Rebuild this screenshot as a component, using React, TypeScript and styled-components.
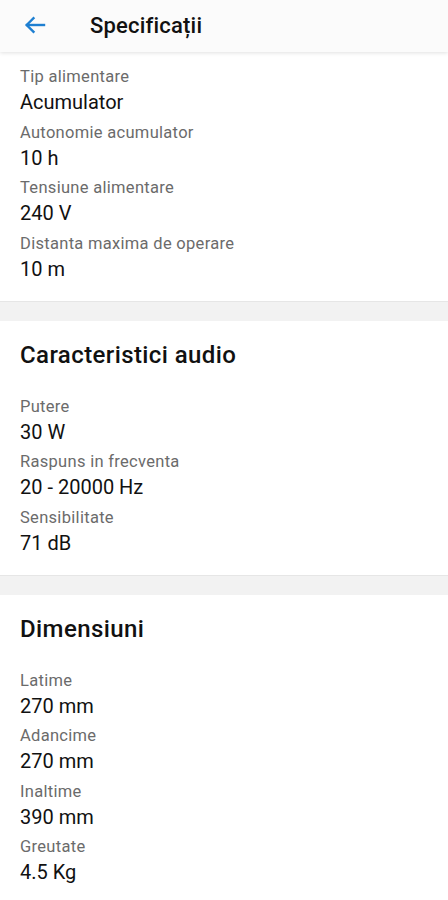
import React from 'react';
import styled, { createGlobalStyle } from 'styled-components';

type Spec = { label: string; value: string };
type Section = { title?: string; specs: Spec[] };

const sections: Section[] = [
  {
    specs: [
      { label: 'Tip alimentare', value: 'Acumulator' },
      { label: 'Autonomie acumulator', value: '10 h' },
      { label: 'Tensiune alimentare', value: '240 V' },
      { label: 'Distanta maxima de operare', value: '10 m' },
    ],
  },
  {
    title: 'Caracteristici audio',
    specs: [
      { label: 'Putere', value: '30 W' },
      { label: 'Raspuns in frecventa', value: '20 - 20000 Hz' },
      { label: 'Sensibilitate', value: '71 dB' },
    ],
  },
  {
    title: 'Dimensiuni',
    specs: [
      { label: 'Latime', value: '270 mm' },
      { label: 'Adancime', value: '270 mm' },
      { label: 'Inaltime', value: '390 mm' },
      { label: 'Greutate', value: '4.5 Kg' },
    ],
  },
];

const GlobalStyle = createGlobalStyle`
  body {
    margin: 0;
    background: #ffffff;
    font-family: Roboto, "Noto Sans", sans-serif;
    color: #111;
  }
`;

const Page = styled.div`
  width: 448px;
  min-height: 900px;
  background: #fff;
  overflow: hidden;
`;

const Header = styled.header`
  height: 52px;
  display: flex;
  align-items: center;
  background: #fbfbfb;
  box-shadow: 0 1px 4px rgba(0, 0, 0, 0.12);
  position: relative;
  z-index: 1;
`;

const BackButton = styled.button`
  width: 70px;
  height: 52px;
  display: flex;
  align-items: center;
  padding: 0 0 2px 24px;
  border: none;
  background: none;
  color: #1e7fd1;
`;

const Title = styled.h1`
  margin: 0 0 2px 20px;
  font-size: 22px;
  font-weight: 500;
  letter-spacing: 0.2px;
  color: #111;
`;

const Block = styled.section<{ $first?: boolean }>`
  padding: ${p => (p.$first ? '13px' : '19px')} 20px 19px;
  background: #fff;
`;

const Divider = styled.div`
  height: 19px;
  background: #f2f2f2;
  border-top: 1px solid #e6e6e6;
`;

const Heading = styled.h2`
  margin: 0 0 25px;
  font-size: 24px;
  line-height: 30px;
  font-weight: 500;
  letter-spacing: 0.4px;
  color: #111;
`;

const SpecList = styled.dl`
  margin: 0;
  display: flex;
  flex-direction: column;
  gap: 5.5px;
`;

const Label = styled.dt`
  font-size: 16.5px;
  line-height: 24px;
  letter-spacing: 0.3px;
  color: #6b6b6b;
`;

const Value = styled.dd`
  margin: 0;
  font-size: 20px;
  line-height: 26px;
  color: #111;
`;

const SpecItem = ({ label, value }: Spec) => (
  <div>
    <Label>{label}</Label>
    <Value>{value}</Value>
  </div>
);

export default function App() {
  return (
    <Page>
      <GlobalStyle />
      <Header>
        <BackButton aria-label="Inapoi">
          <svg width="22" height="18" viewBox="0 0 22 18" fill="none" stroke="currentColor" strokeWidth="2.4" strokeLinecap="square">
            <path d="M3 9h17" />
            <path d="M9.5 2.2 2.7 9l6.8 6.8" />
          </svg>
        </BackButton>
        <Title>Specificații</Title>
      </Header>
      {sections.map((s, i) => (
        <React.Fragment key={i}>
          {i > 0 && <Divider />}
          <Block $first={i === 0}>
            {s.title && <Heading>{s.title}</Heading>}
            <SpecList>
              {s.specs.map(sp => (
                <SpecItem key={sp.label} {...sp} />
              ))}
            </SpecList>
          </Block>
        </React.Fragment>
      ))}
    </Page>
  );
}
